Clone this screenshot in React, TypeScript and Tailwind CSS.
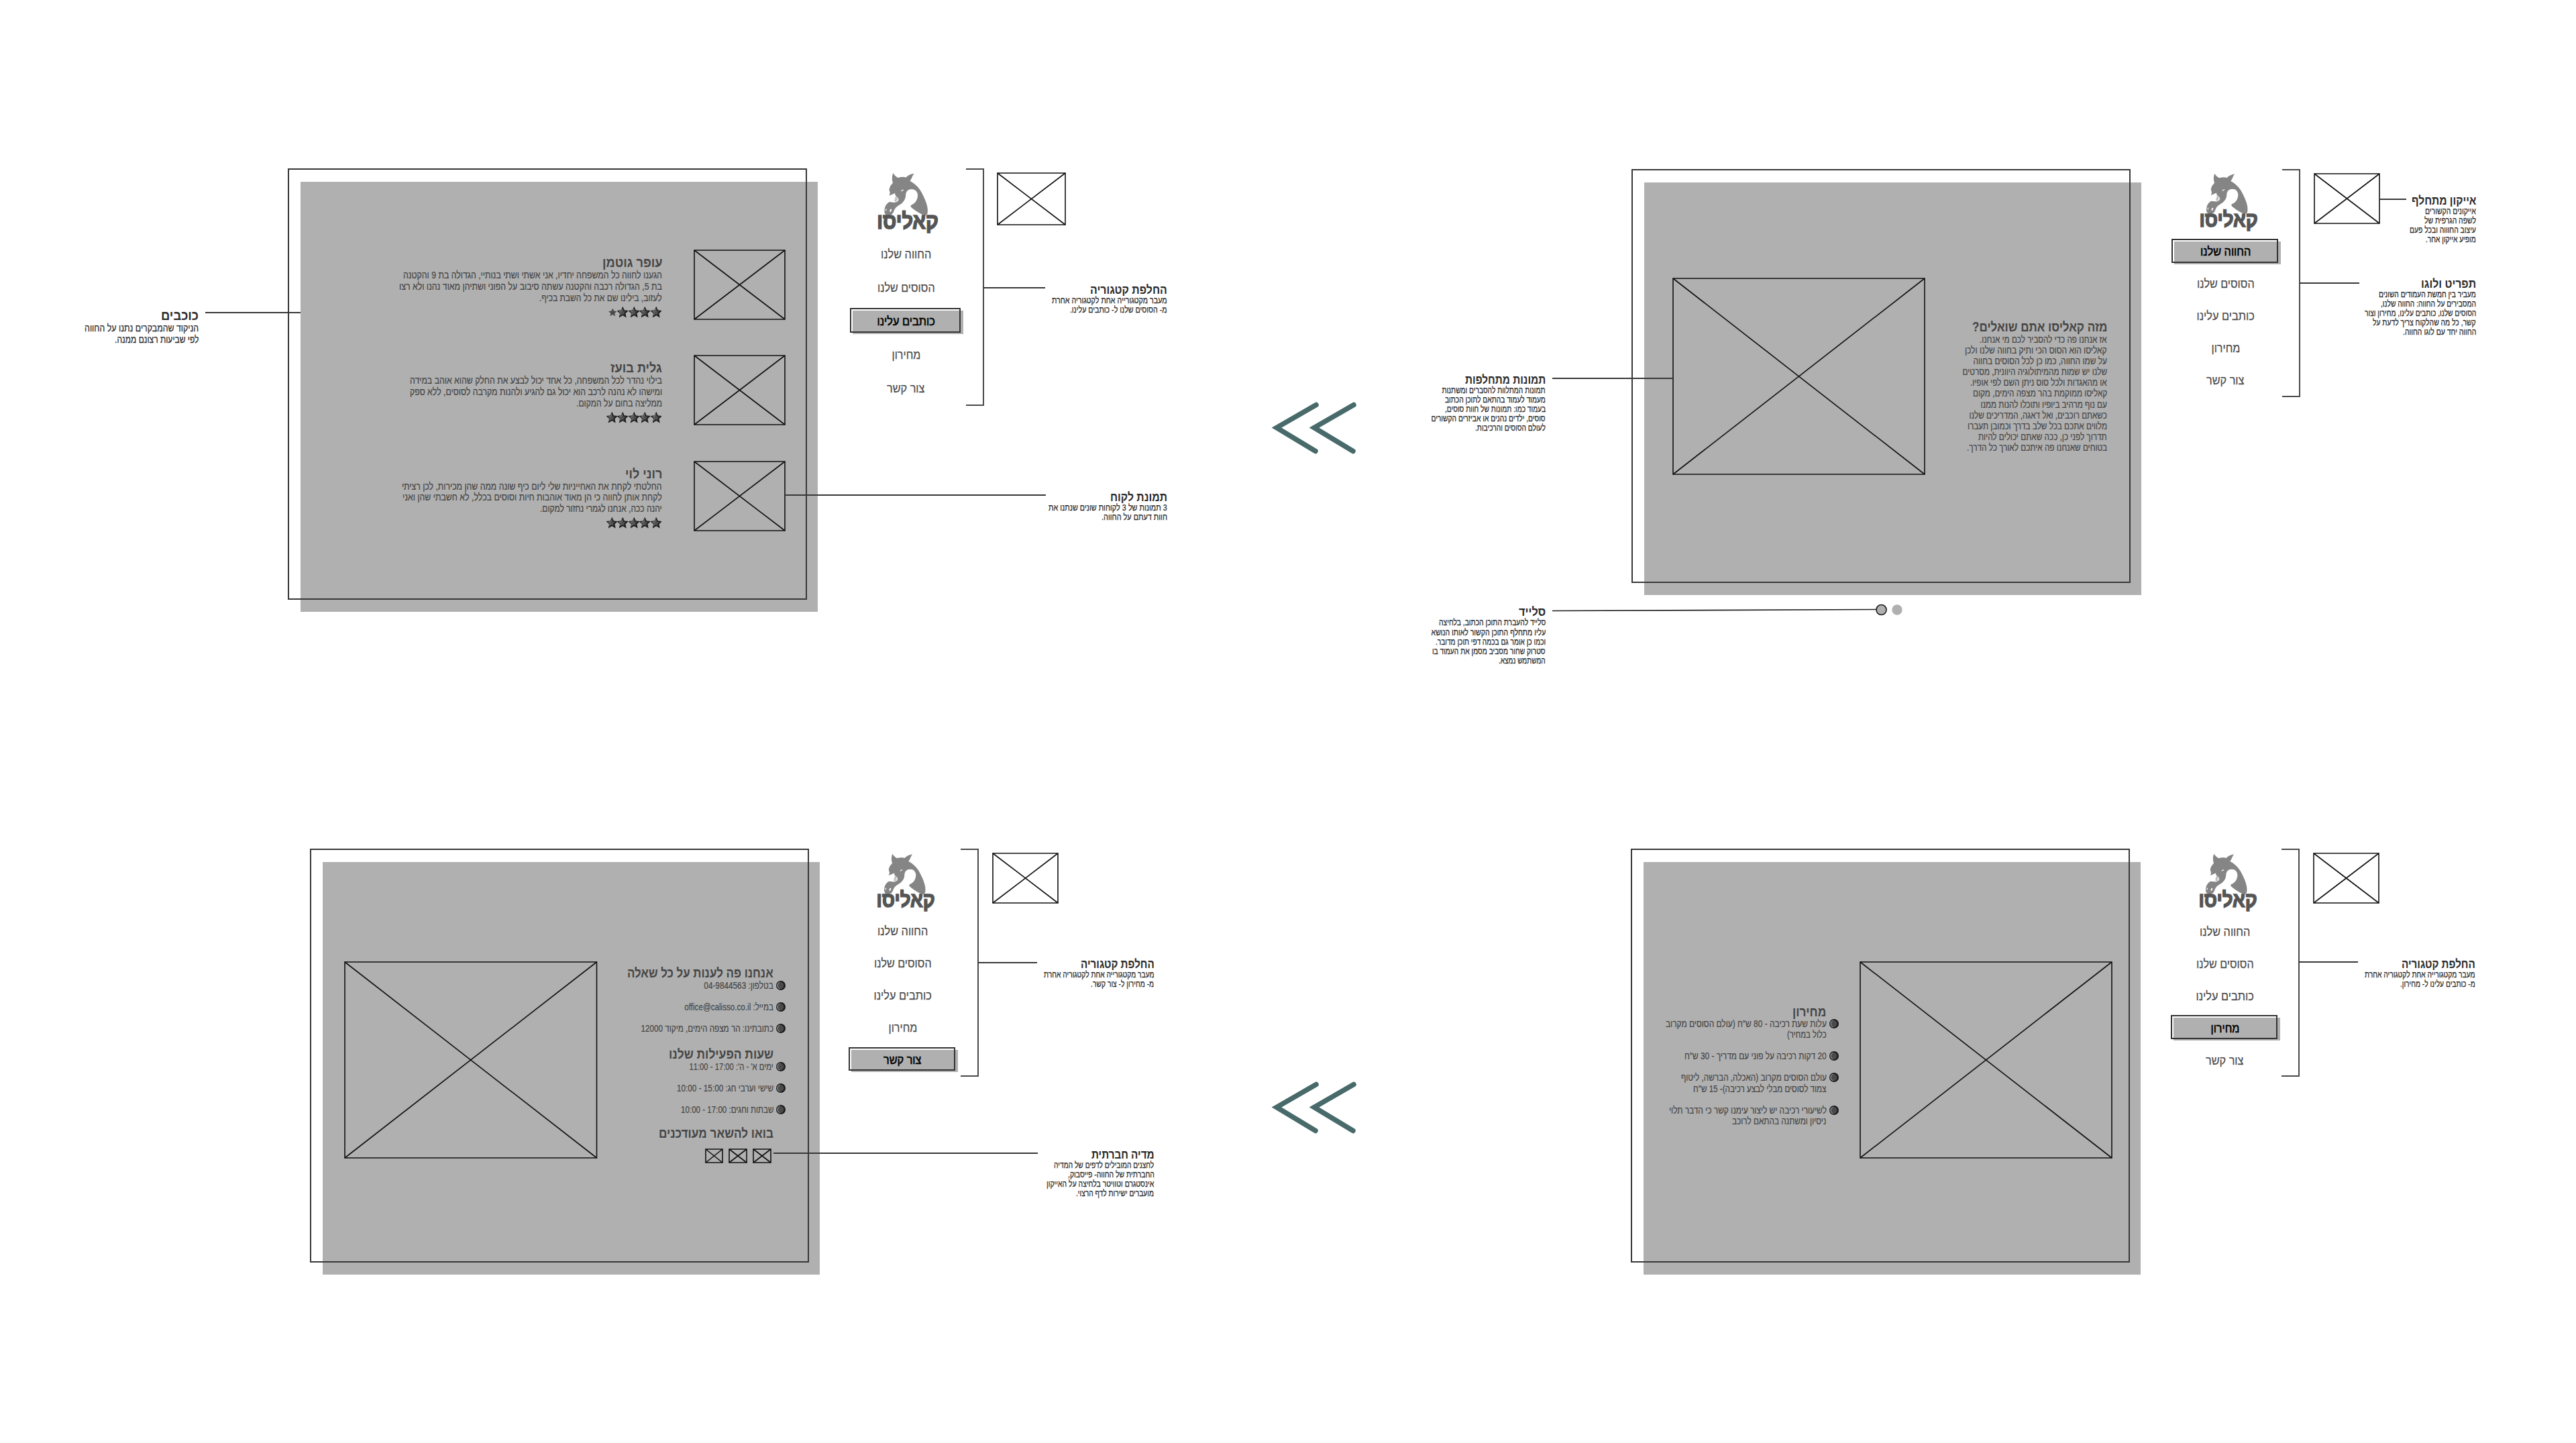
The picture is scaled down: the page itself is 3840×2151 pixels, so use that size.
import { useLayoutEffect, useRef, useState } from "react";
import type { ReactNode } from "react";
import clsx from "clsx";

type TextLine = [text: string, width: number];

/** One line of text condensed horizontally to a given width. */
function FitLine({ line, center = false }: { line: TextLine; center?: boolean }) {
  const ref = useRef<HTMLSpanElement>(null);
  const [scale, setScale] = useState(1);
  useLayoutEffect(() => {
    if (ref.current) setScale(line[1] / ref.current.offsetWidth);
  }, [line]);
  return (
    <span dir="rtl" className={clsx("flex w-full whitespace-nowrap", center && "justify-center")}>
      <span
        ref={ref}
        className={clsx("block shrink-0", center ? "origin-center" : "origin-right")}
        style={{ transform: `scaleX(${scale})` }}
      >
        {line[0]}
      </span>
    </span>
  );
}

/** Image placeholder: a box crossed by its diagonals. */
function Placeholder({ className }: { className: string }) {
  return (
    <svg className={clsx("block shrink-0 overflow-visible", className)} viewBox="0 0 100 100" preserveAspectRatio="none">
      <g fill="none" stroke="#111" strokeWidth="1.6">
        <rect x="0" y="0" width="100" height="100" vectorEffect="non-scaling-stroke" />
        <path d="M0 0L100 100M100 0L0 100" vectorEffect="non-scaling-stroke" />
      </g>
    </svg>
  );
}

/** Thin connector between a note and the part it explains. */
function Leader({ className }: { className: string }) {
  return <div className={clsx("absolute z-10 h-[2px] bg-[#383838]", className)} />;
}

interface NoteProps {
  className?: string;
  leader?: string;
  title: TextLine;
  lines: TextLine[];
  large?: boolean;
  children?: ReactNode;
}

function Note({ className, leader, title, lines, large = false, children }: NoteProps) {
  return (
    <div className={clsx("relative text-[#2b2b2b]", className)}>
      <h3 className={clsx("pt-px font-bold", large ? "text-[20px] leading-[20px]" : "text-[18px] leading-[18px]")}>
        <FitLine line={title} />
      </h3>
      {lines.map((l) => (
        <p
          key={l[0]}
          className={clsx("[-webkit-text-stroke:0.25px]", large ? "text-[15.5px] leading-[17px]" : "text-[13.5px] leading-[14.1px]")}
        >
          <FitLine line={l} />
        </p>
      ))}
      {leader && <Leader className={leader} />}
      {children}
    </div>
  );
}

function Logo() {
  return (
    <div className="w-[96px]">
      <svg className="block h-[66px] w-[96px]" viewBox="0 0 288 198">
        <path
          fill="#858585"
          fillRule="evenodd"
          d="M82 14C88 24 95 30 103 34C116 30 128 30 137 33C144 24 156 20 171 16C164 26 162 38 154 48C180 62 196 80 208 106C222 134 232 160 229 182C228 192 222 196 212 193C198 188 178 176 160 161C155 156 156 151 162 149C180 142 187 124 187 108C186 93 176 83 162 83C146 83 137 92 136 108C136 122 130 134 118 144C106 152 92 158 86 174C82 188 72 196 60 195C48 194 43 184 46 168C48 150 58 143 66 137L84 139C92 140 98 138 104 133C108 126 105 119 97 114L92 110C90 106 93 101 88 101L66 111L69 98L65 84L70 70L81 56C76 42 77 26 82 14ZM115 93L126 88L127 84L118 87ZM50 172C51 165 55 163 54 171C53 176 50 178 50 172ZM68 172C72 164 78 166 75 174C72 182 67 182 68 172Z"
        />
        <path d="M90 117l14 6M88 124l16 5M87 131l13 3M97 113l-5 22" stroke="#858585" strokeWidth="2" />
      </svg>
      <div className="-mt-[10px] text-[31px] leading-[36px] font-bold text-[#555] [-webkit-text-stroke:1.6px_#555]">
        <FitLine line={["קאליסו", 87]} center />
      </div>
    </div>
  );
}

const ITEMS: TextLine[] = [
  ["החווה שלנו", 75],
  ["הסוסים שלנו", 86],
  ["כותבים עלינו", 86],
  ["מחירון", 43],
  ["צור קשר", 56],
];

interface MenuProps {
  header: string;
  row: string;
  width: string;
  box: string;
  active: number;
  children: ReactNode;
}

/** Site menu: logo on top, five links below, the current one in a raised box. */
function Menu({ header, row, width, box, active, children }: MenuProps) {
  return (
    <nav className={clsx("flex shrink-0 flex-col text-[18px] text-[#4d4d4d]", width)}>
      <div className={clsx("flex justify-center", header)}>{children}</div>
      {ITEMS.map((item, i) => (
        <div key={item[0]} className={clsx("relative flex items-center pt-[2px]", row, i === active && "text-black")}>
          {i === active && (
            <>
              <div className={clsx("absolute inset-y-[7px] left-[4px] translate-y-[2px] bg-[#b0b0b0]", box)} />
              <div className={clsx("absolute inset-y-[6px] left-0 -translate-y-px border-2 border-[#333]", box)} />
            </>
          )}
          <div className={clsx("relative w-full", i === active ? "[-webkit-text-stroke:0.6px]" : "[-webkit-text-stroke:0.25px]")}>
            <FitLine line={item} center />
          </div>
        </div>
      ))}
    </nav>
  );
}

/** Page outline over a grey sheet that is shifted down and to the right. */
function Sheet({ className, children }: { className: string; children: ReactNode }) {
  return (
    <section dir="rtl" className={clsx("relative isolate flex shrink-0 border-2 border-transparent text-[#454545]", className)}>
      <div className="absolute top-[18px] -right-[18px] -bottom-[20px] left-[17px] -z-10 bg-[#b0b0b0]" />
      <div className="absolute -inset-[2px] -z-10 border-2 border-[#383838]" />
      {children}
    </section>
  );
}

function Bracket({ className }: { className: string }) {
  return <div className={clsx("w-[27px] shrink-0 border-2 border-l-0 border-[#4a4a4a]", className)} />;
}

function Chevrons({ className }: { className: string }) {
  return (
    <svg className={clsx("h-[90px] w-[136px] shrink-0", className)} viewBox="0 0 136 90" fill="none" stroke="#486a6a" strokeWidth="7.5" strokeLinecap="round" strokeMiterlimit="10">
      <path d="M73 10.500L14 44.500L72 79.500M129 10.500L70 44.500L128 79.500" />
    </svg>
  );
}

const STAR = "M9 1L11.400 6.200L17 6.800L12.800 10.600L14 16.300L9 13.400L4 16.300L5.200 10.600L1 6.800L6.600 6.200Z";

function Stars({ filled }: { filled: number }) {
  return (
    <div className="flex h-[18px] items-center pr-px">
      {[0, 1, 2, 3, 4].map((i) => (
        <svg key={i} className="h-[17px] w-[16.500px]" viewBox="0 0 18 18">
          {i < filled ? (
            <>
              <path d={STAR} fill="#1c1c1c" stroke="#1c1c1c" strokeWidth="1.300" />
              <path d="M8.500 3L10.300 7L14 7.600L11 10.300L11.900 14L8.500 12L5 14L6 10.300L3.200 7.600L7 7Z" fill="#505050" />
              <path d="M8.500 3L7 7L3.200 7.600L6 10.300L5 14" fill="none" stroke="#8c8c8c" strokeWidth="0.900" />
            </>
          ) : (
            <path d={STAR} fill="#4a4a4a" transform="translate(2.500 1.500) scale(.85)" />
          )}
        </svg>
      ))}
    </div>
  );
}

function Heading({ line, className }: { line: TextLine; className?: string }) {
  return (
    <h2 className={clsx("text-[20px] leading-[22px] font-bold", className)}>
      <FitLine line={line} />
    </h2>
  );
}

interface ReviewData {
  name: TextLine;
  lines: TextLine[];
  filled: number;
}

const REVIEWS: ReviewData[] = [
  {
    name: ["עופר גוטמן", 89],
    lines: [
      ["הגענו לחווה כל המשפחה יחדיו, אני אשתי ושתי בנותיי, הגדולה בת 9 והקטנה", 386],
      ["בת 5, הגדולה רכבה והקטנה עשתה סיבוב על הפוני ושתיהן מאוד נהנו ולא רצו", 392],
      ["לעזוב, בילינו שם את כל השבת בכיף.", 183],
    ],
    filled: 4,
  },
  {
    name: ["גלית בועז", 77],
    lines: [
      ["בילוי נהדר לכל המשפחה, כל אחד יכול לבצע את החלק שהוא אוהב במידה", 376],
      ["ומישהו לא נהנה לרכב הוא יכול גם להגיע ולהנות מקרבה לסוסים, ללא ספק", 376],
      ["ממליצה בחום על המקום.", 128],
    ],
    filled: 5,
  },
  {
    name: ["רוני לוי", 55],
    lines: [
      ["החלטתי לקחת את האחייניות שלי ליום כיף שונה ממה שהן מכירות, לכן רציתי", 388],
      ["לקחת אותן לחווה כי הן מאוד אוהבות חיות וסוסים בכלל, לא חשבתי שהן ואני", 387],
      ["יהנה ככה, אנחנו לגמרי נחזור למקום.", 182],
    ],
    filled: 5,
  },
];

function Review({ data }: { data: ReviewData }) {
  return (
    <article className="flex items-start gap-[48px]">
      <Placeholder className="h-[103px] w-[135px]" />
      <div className="w-[392px] pt-[7px]">
        <Heading line={data.name} />
        {data.lines.map((l) => (
          <p key={l[0]} className="text-[15.500px] leading-[16.800px] [-webkit-text-stroke:0.2px]">
            <FitLine line={l} />
          </p>
        ))}
        <div className="mt-[4px]">
          <Stars filled={data.filled} />
        </div>
      </div>
    </article>
  );
}

function BulletItem({ lines }: { lines: TextLine[] }) {
  return (
    <li className="flex items-start gap-[4px] text-[15px] leading-[16.100px] [-webkit-text-stroke:0.2px]">
      <svg className="mt-px size-[14px] shrink-0" viewBox="0 0 14 14">
        <circle cx="7" cy="7" r="7" fill="#1a1a1a" />
        <circle cx="6.300" cy="7" r="5.200" fill="#4a4a4a" />
        <path d="M5.500 2A5.300 5.300 0 0 0 5.500 12" fill="none" stroke="#a0a0a0" strokeWidth="1" />
      </svg>
      <div className="min-w-0 flex-1">
        {lines.map((l) => (
          <FitLine key={l[0]} line={l} />
        ))}
      </div>
    </li>
  );
}

const ABOUT: TextLine[] = [
  ["אז אנחנו פה כדי להסביר לכם מי אנחנו.", 190],
  ["קאליסו הוא הסוס הכי ותיק בחווה שלנו ולכן", 212],
  ["על שמו החווה, כמו כן לכל הסוסים בחווה", 199.5],
  ["שלנו יש שמות מהמיתולוגיה היוונית, מסרטים", 215.4],
  ["או מהאגדות ולכל סוס ניתן השם לפי אופיו.", 204],
  ["קאליסו ממוקמת בהר מצפה הימים, מקום", 200],
  ["עם נוף מרהיב ביופיו ותוכלו להנות ממנו", 188.5],
  ["כשאתם רוכבים, ואל דאגה, המדריכים שלנו", 205.4],
  ["מלווים אתכם בכל שלב בדרך וכמובן תעברו", 208],
  ["תדרוך לפני כן, ככה שאתם יכולים להיות", 192],
  ["בטוחים שאנחנו פה איתכם לאורך כל הדרך.", 209],
];

const PRICES: TextLine[][] = [
  [
    ["עלות שעת רכיבה - 80 ש\"ח (עולם הסוסים מקרוב", 240],
    ["כלול במחיר)", 59],
  ],
  [["20 דקות רכיבה על פוני עם מדריך - 30 ש\"ח", 212]],
  [
    ["עולם הסוסים מקרוב (האכלה, הברשה, ליטוף", 217],
    ["צמוד לסוסים מבלי לבצע רכיבה)- 15 ש\"ח", 198],
  ],
  [
    ["לשיעורי רכיבה יש ליצור עימנו קשר כי הדבר תלוי", 235],
    ["ניסיון ומשתנה בהתאם לרוכב", 140],
  ],
];

const CONTACT: TextLine[] = [
  ["בטלפון: 04-9844563", 103.6],
  ["במייל: office@calisso.co.il", 132.7],
  ["כתובתינו: הר מצפה הימים, מיקוד 12000", 197.5],
];

const HOURS: TextLine[] = [
  ["ימים א' - ה': 17:00 - 11:00", 125.5],
  ["שישי וערבי חג: 15:00 - 10:00", 144],
  ["שבתות וחגים: 17:00 - 10:00", 138],
];

function ReviewsBoard() {
  return (
    <div className="flex items-start">
      <aside className="mt-[208px] ml-[96px] w-[200px]">
        <Note
          large
          leader="top-[6px] left-[210px] w-[142px]"
          title={["כוכבים", 56]}
          lines={[
            ["הניקוד שהמבקרים נתנו על החווה", 170],
            ["לפי שביעות רצונם ממנה.", 125],
          ]}
        />
      </aside>
      <Sheet className="ml-[133px] h-[643px] w-[774px] flex-col gap-[54.300px] pt-[120px] pr-[31px]">
        {REVIEWS.map((r) => (
          <Review key={r.name[0]} data={r} />
        ))}
      </Sheet>
      <div className="ml-[64px] flex items-start gap-[6px]">
        <Menu width="w-[167px]" header="h-[103px] pt-[2px] pl-[4px]" row="h-[49.800px]" box="w-[165px]" active={2}>
          <div className="h-[96px] origin-top scale-[1.050]">
            <Logo />
          </div>
        </Menu>
        <Bracket className="h-[354px]" />
      </div>
      <aside className="mt-[7px] ml-[20px] flex w-[253px] flex-col">
        <Placeholder className="h-[77px] w-[101px]" />
        <Note
          className="mt-[87px]"
          leader="top-[6px] -left-[21px] w-[92px]"
          title={["החלפת קטגוריה", 115]}
          lines={[
            ["מעבר מקטגורייה אחת לקטגוריה אחרת", 172],
            ["מ- הסוסים שלנו ל- כותבים עלינו.", 145],
          ]}
        />
        <Note
          className="mt-[262px]"
          leader="top-[6px] -left-[317px] w-[389px]"
          title={["תמונת לקוח", 85]}
          lines={[
            ["3 תמונות של 3 לקוחות שונים שנתנו את", 177],
            ["חוות דעתם על החווה.", 98],
          ]}
        />
      </aside>
    </div>
  );
}

function AboutBoard() {
  return (
    <div className="flex items-start">
      <aside className="mt-[305px] flex w-[200px] flex-col gap-[256px]">
        <Note
          leader="top-[7px] left-[210px] w-[179px]"
          title={["תמונות מתחלפות", 120]}
          lines={[
            ["תמונות המתלוות להסברים ומשתנות", 154.5],
            ["מעמוד לעמוד בהתאם לתוכן הכתוב", 150],
            ["בעמוד כמו: תמונות של חוות סוסים,", 150],
            ["סוסים, ילדים נהנים או אביזרים הקשורים", 170.5],
            ["לעולם הסוסים והרכיבות.", 105],
          ]}
        />
        <Note
          className="pt-px"
          title={["סלייד", 40]}
          lines={[
            ["סלייד להעברת התוכן הכתוב, בלחיצה", 159],
            ["עליו מתחלף התוכן הקשור לאותו הנושא", 170.5],
            ["וכמו כן אומר גם בכמה דפי תוכן מדובר.", 164],
            ["סטרוק שחור מסביב מסמן את העמוד בו", 169],
            ["המשתמש נמצא.", 70],
          ]}
        >
          <svg className="absolute -top-[3.500px] left-[210px] h-[22px] w-[524px]" viewBox="0 0 524 22">
            <path d="M0 12.500L483 10.500" stroke="#222" strokeWidth="1.700" />
            <circle cx="490.500" cy="11" r="7.500" fill="#b0b0b0" stroke="#222" strokeWidth="1.700" />
            <circle cx="514" cy="11" r="7.700" fill="#b0b0b0" />
          </svg>
        </Note>
      </aside>
      <Sheet className="mt-px ml-[128px] h-[617px] w-[744px] items-start justify-between pt-[161px] pr-[33px] pl-[60px]">
        <div className="w-[216px] pt-[61px]">
          <Heading line={["מזה קאליסו אתם שואלים?", 201]} />
          {ABOUT.map((l) => (
            <p key={l[0]} className="text-[15px] leading-[16.100px] [-webkit-text-stroke:0.2px]">
              <FitLine line={l} />
            </p>
          ))}
        </div>
        <Placeholder className="h-[292px] w-[375px]" />
      </Sheet>
      <div className="ml-[61px] flex items-start gap-[4px]">
        <Menu width="w-[161px]" header="h-[100px] pt-[3px] pl-[9px]" row="h-[47.800px]" box="w-[159px]" active={0}>
          <Logo />
        </Menu>
        <Bracket className="mt-px h-[340px]" />
      </div>
      <aside className="mt-[7.500px] ml-[21px] flex w-[241px] flex-col gap-[49px]">
        <div className="flex items-start justify-between">
          <Placeholder className="h-[74px] w-[97px]" />
          <Note
            className="mt-[30px] w-[120px]"
            leader="top-[7px] -left-[24px] w-[40px]"
            title={["אייקון מתחלף", 96]}
            lines={[
              ["אייקונים הקשורים", 76],
              ["לשפה הגרפית של", 77],
              ["עיצוב החוווה ובכל פעם", 99],
              ["מופיע אייקון אחר.", 75],
            ]}
          />
        </div>
        <Note
          leader="top-[8px] -left-[22px] w-[89px]"
          title={["תפריט ולוגו", 82]}
          lines={[
            ["מעביר בין חמשת העמודים השונים", 145],
            ["המסבירים על החווה: החווה שלנו,", 142],
            ["הסוסים שלנו, כותבים עלינו, מחירון וצור", 166],
            ["קשר, כל מה שהלקוח צריך לדעת על", 154],
            ["החווה יחד עם לוגו החווה.", 109],
          ]}
        />
      </aside>
    </div>
  );
}

function ContactBoard() {
  return (
    <div className="flex items-start">
      <Sheet className="ml-[462px] h-[617px] w-[744px] items-start justify-between pt-[167px] pr-[33px] pl-[50px]">
        <div className="flex w-[240px] flex-col gap-[2px] pt-[5px]">
          <div>
            <Heading line={["אנחנו פה לענות על כל שאלה", 218]} className="mr-[18px]" />
            <ul className="flex flex-col gap-[16.100px] pb-[16.100px]">
              {CONTACT.map((l) => (
                <BulletItem key={l[0]} lines={[l]} />
              ))}
            </ul>
          </div>
          <div>
            <Heading line={["שעות הפעילות שלנו", 156]} className="mr-[18px]" />
            <ul className="flex flex-col gap-[16.100px] pb-[14px]">
              {HOURS.map((l) => (
                <BulletItem key={l[0]} lines={[l]} />
              ))}
            </ul>
          </div>
          <div className="flex flex-col gap-[13px]">
            <Heading line={["בואו להשאר מעודכנים", 171]} className="mr-[18px]" />
            <div className="flex gap-[10px] pr-[22px]">
              <Placeholder className="h-[20px] w-[26px]" />
              <Placeholder className="h-[20px] w-[26px]" />
              <Placeholder className="h-[20px] w-[25px]" />
            </div>
          </div>
        </div>
        <Placeholder className="h-[292px] w-[375.500px]" />
      </Sheet>
      <div className="ml-[59px] flex items-start gap-[6px]">
        <Menu width="w-[161px]" header="h-[99px] pt-[3px] pl-[10px]" row="h-[47.900px]" box="w-[159px]" active={4}>
          <Logo />
        </Menu>
        <Bracket className="h-[340px]" />
      </div>
      <aside className="mt-[6.500px] ml-[21px] flex w-[240.500px] flex-col">
        <Placeholder className="h-[74px] w-[97px]" />
        <Note
          className="mt-[81px]"
          leader="top-[7px] -left-[22px] w-[88px]"
          title={["החלפת קטגוריה", 110]}
          lines={[
            ["מעבר מקטגורייה אחת לקטגוריה אחרת", 165],
            ["מ- מחירון ל- צור קשר.", 94],
          ]}
        />
        <Note
          className="mt-[237px]"
          leader="top-[7px] -left-[327px] w-[394px]"
          title={["מדיה חברתית", 94]}
          lines={[
            ["לחצנים המובילים לדפים של המדיה", 149],
            ["החברתית של החווה- פייסבוק,", 129],
            ["אינסטגרם וטוויטר בלחיצה על האייקון", 160],
            ["מועברים ישירות לדף הרצוי.", 116],
          ]}
        />
      </aside>
    </div>
  );
}

function PricesBoard() {
  return (
    <div className="flex items-start">
      <Sheet className="h-[617px] w-[744px] items-start gap-[32px] pt-[167px] pr-[25.500px]">
        <Placeholder className="h-[292px] w-[375px]" />
        <div className="w-[258px] pt-[63px]">
          <Heading line={["מחירון", 50]} className="mr-[18px] h-[21px]" />
          <ul className="flex flex-col gap-[16.100px]">
            {PRICES.map((p) => (
              <BulletItem key={p[0][0]} lines={p} />
            ))}
          </ul>
        </div>
      </Sheet>
      <div className="ml-[61px] flex items-start gap-[4px]">
        <Menu width="w-[161px]" header="h-[99.500px] pt-[3px] pl-[9px]" row="h-[47.900px]" box="w-[159px]" active={3}>
          <Logo />
        </Menu>
        <Bracket className="h-[340px]" />
      </div>
      <aside className="mt-[7px] ml-[21px] flex w-[240.500px] flex-col">
        <Placeholder className="h-[74px] w-[97px]" />
        <Note
          className="mt-[81px]"
          leader="top-[6px] -left-[22px] w-[88px]"
          title={["החלפת קטגוריה", 110]}
          lines={[
            ["מעבר מקטגורייה אחת לקטגוריה אחרת", 165],
            ["מ- כותבים עלינו ל- מחירון.", 112],
          ]}
        />
      </aside>
    </div>
  );
}

export default function App() {
  return (
    <main className="flex h-[2151px] w-[3840px] flex-col overflow-hidden bg-white pt-[251px] font-['Liberation_Sans',sans-serif]">
      <div className="flex h-[1014px] items-start">
        <ReviewsBoard />
        <Chevrons className="mt-[342px] mr-[79px] ml-[149px]" />
        <AboutBoard />
      </div>
      <div className="flex items-start">
        <ContactBoard />
        <Chevrons className="mt-[341px] mr-[406px] ml-[168.500px]" />
        <PricesBoard />
      </div>
    </main>
  );
}
